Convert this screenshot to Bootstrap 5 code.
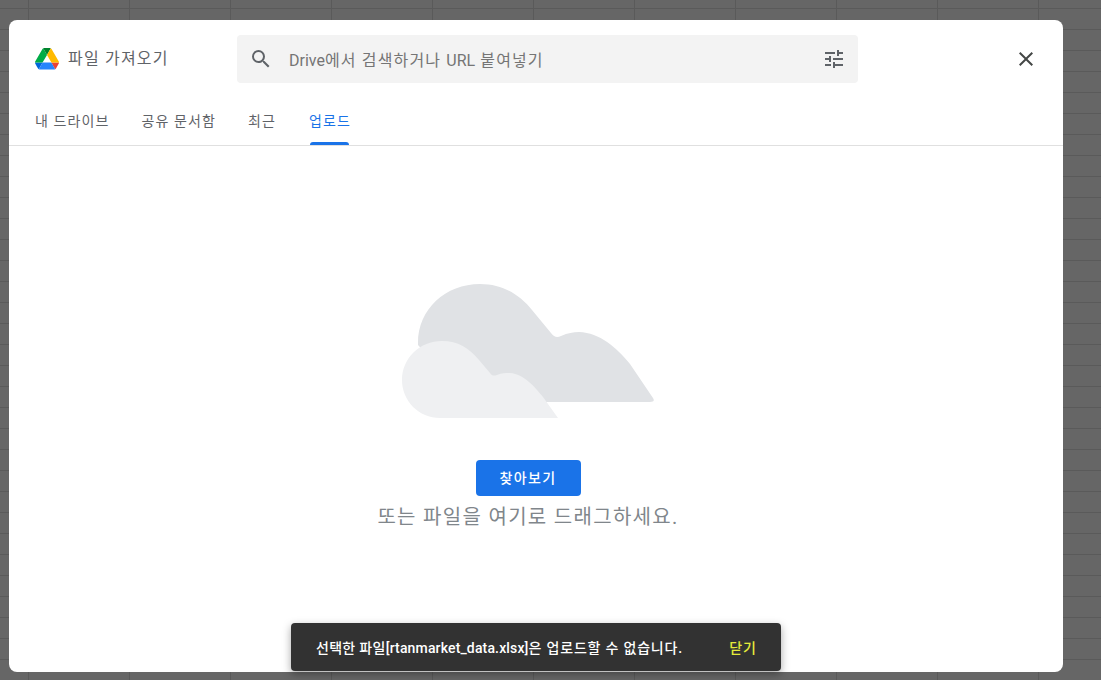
<!doctype html>
<html lang="ko">
<head>
    <meta charset="utf-8">
    <title>파일 가져오기</title>
    <link href="https://cdn.jsdelivr.net/npm/bootstrap@5.3.3/dist/css/bootstrap.min.css" rel="stylesheet">
    <style>
        html, body { height: 100%; }
        body {
            font-family: Roboto, "Noto Sans CJK KR", sans-serif;
            background-color: #666;
            background-image:
                linear-gradient(to right, #5a5a5a 1px, transparent 1px),
                linear-gradient(to bottom, #5a5a5a 1px, transparent 1px);
            background-size: 101px 21px;
            background-position: 28px 8px;
            overflow: hidden;
            padding: 20px 38px 8px 9px;
        }
        .lat { letter-spacing: 0; }
        .picker { height: 652px; border-radius: 8px; }
        .picker-head { height: 126px; border-bottom: 1px solid #e0e0e0; }
        .picker-top { height: 78px; padding: 15px 25px 0 26px; }
        .brand { width: 202px; font-size: 16px; color: #5f6368; gap: 9px; letter-spacing: 1.2px; }
        .search { width: 621px; height: 48px; background: #f3f3f3; border-radius: 4px; padding: 0 12px; color: #757575; font-size: 16px; letter-spacing: 1.15px; }
        .search .hint { margin-left: 16px; padding-top: 3px; }
        .tabs { gap: 32px; padding-left: 26px; height: 47px; font-size: 14px; letter-spacing: 1.1px; }
        .tabs .nav-link { padding: 0; height: 47px; line-height: 46px; color: #5f6368; position: relative; }
        .tabs .nav-link.active { color: #1a73e8; margin-left: 1px; }
        .tabs .nav-link.active::after { content: ""; position: absolute; left: 1px; right: 2px; bottom: 0; height: 3px; background: #1a73e8; border-radius: 3px 3px 0 0; }
        .cloud { margin-top: 124px; display: block; }
        .btn-browse { width: 105px; height: 36px; margin-top: 40px; background: #1a73e8; color: #fff; font-size: 14px; font-weight: 500; letter-spacing: 1.4px; padding: 0; border-radius: 4px; border: 0; }
        .drag { font-size: 20px; color: #80868b; line-height: 28px; margin-top: 7px; letter-spacing: 1.3px; }
        .snack { left: 282px; bottom: 1px; width: 490px; height: 48px; background: #323232; color: #fff; font-size: 14px; font-weight: 500; letter-spacing: .3px; border-radius: 4px; padding: 2px 24px 0 25px; box-shadow: 0 3px 8px rgba(0,0,0,.35); }
        .snack .lat { letter-spacing: .15px; }
        .snack .tail { letter-spacing: .8px; }
        .snack a { color: #e4ea3a; text-decoration: none; letter-spacing: 1px; }
    </style>
</head>
<body>

<div class="picker bg-white position-relative">

    <!-- header -->
    <div class="picker-head">
        <div class="picker-top d-flex">
            <div class="brand d-flex align-items-center" style="height:48px">
                <svg width="24" height="21.5" viewBox="0 0 87.3 78">
                    <path d="m6.6 66.85 3.85 6.65c.8 1.4 1.95 2.5 3.3 3.3l13.75-23.8h-27.5c0 1.55.4 3.1 1.2 4.5z" fill="#0066da"/>
                    <path d="m43.65 25-13.75-23.8c-1.35.8-2.5 1.9-3.3 3.3l-25.4 44a9.06 9.06 0 0 0 -1.2 4.5h27.5z" fill="#00ac47"/>
                    <path d="m73.55 76.8c1.35-.8 2.5-1.9 3.3-3.3l1.6-2.75 7.65-13.25c.8-1.4 1.2-2.95 1.2-4.5h-27.502l5.852 11.5z" fill="#ea4335"/>
                    <path d="m43.65 25 13.75-23.8c-1.35-.8-2.9-1.2-4.5-1.2h-18.5c-1.6 0-3.15.45-4.5 1.2z" fill="#00832d"/>
                    <path d="m59.8 53h-32.3l-13.75 23.8c1.35.8 2.9 1.2 4.5 1.2h50.8c1.6 0 3.15-.45 4.5-1.2z" fill="#2684fc"/>
                    <path d="m73.4 26.5-12.7-22c-.8-1.4-1.95-2.5-3.3-3.3l-13.75 23.8 16.15 28h27.45c0-1.55-.4-3.1-1.2-4.5z" fill="#ffba00"/>
                </svg>
                <span>파일 가져오기</span>
            </div>
            <div class="search d-flex align-items-center">
                <svg width="24" height="24" viewBox="0 0 24 24" fill="#5f6368"><path d="M15.5 14h-.79l-.28-.27A6.471 6.471 0 0 0 16 9.5 6.5 6.5 0 1 0 9.5 16c1.61 0 3.09-.59 4.23-1.57l.27.28v.79l5 4.99L20.49 19l-4.99-5zm-6 0C7.01 14 5 11.99 5 9.5S7.01 5 9.5 5 14 7.01 14 9.5 11.99 14 9.5 14z"/></svg>
                <span class="hint flex-grow-1"><span class="lat">Drive</span>에서 검색하거나 <span class="lat">URL</span> 붙여넣기</span>
                <svg width="24" height="24" viewBox="0 0 24 24" fill="#5f6368"><path d="M3 17v2h6v-2H3zM3 5v2h10V5H3zm10 16v-2h8v-2h-8v-2h-2v6h2zM7 9v2H3v2h4v2h2V9H7zm14 4v-2H11v2h10zm-6-4h2V7h4V5h-4V3h-2v6z"/></svg>
            </div>
            <div class="ms-auto d-flex align-items-center" style="height:48px">
                <svg width="24" height="24" viewBox="0 0 24 24" fill="#444746"><path d="M19 6.41L17.59 5 12 10.59 6.41 5 5 6.41 10.59 12 5 17.59 6.41 19 12 13.41 17.59 19 19 17.59 13.41 12z"/></svg>
            </div>
        </div>
        <!-- tabs -->
        <nav class="nav tabs">
            <a class="nav-link" href="#">내 드라이브</a>
            <a class="nav-link" href="#">공유 문서함</a>
            <a class="nav-link" href="#">최근</a>
            <a class="nav-link active" href="#">업로드</a>
        </nav>
    </div>

    <!-- upload area -->
    <div class="d-flex flex-column align-items-center" style="padding-right:16px">
        <svg class="cloud" width="280" height="150" viewBox="388 270 280 150">
            <path fill="#e0e2e5" d="M418 345C417 310 445 284 480 284C503 284 520 295 532 310L551 333C554 337 557 338 561 336C568 333 573 332 579 332C600 333 616 347 630 364L653 398C655 401 653 402 650 402H470Z"/>
            <path fill="#eff0f2" d="M402 380C402 358 420 341 442 341C458 341 469 348 479 360L490 373C492 376 494 376 497 375C502 373 505 373 510 373C524 374 535 387 543 397L558 418H440C419 418 402 401 402 380Z"/>
        </svg>
        <button class="btn btn-browse">찾아보기</button>
        <div class="drag">또는 파일을 여기로 드래그하세요.</div>
    </div>

    <!-- snackbar -->
    <div class="snack position-absolute d-flex align-items-center justify-content-between">
        <span>선택한 파일<span class="lat">[rtanmarket_data.xlsx]</span><span class="tail">은 업로드할 수 없습니다.</span></span>
        <a href="#">닫기</a>
    </div>
</div>

<script src="https://cdn.jsdelivr.net/npm/bootstrap@5.3.3/dist/js/bootstrap.bundle.min.js"></script>
</body>
</html>
